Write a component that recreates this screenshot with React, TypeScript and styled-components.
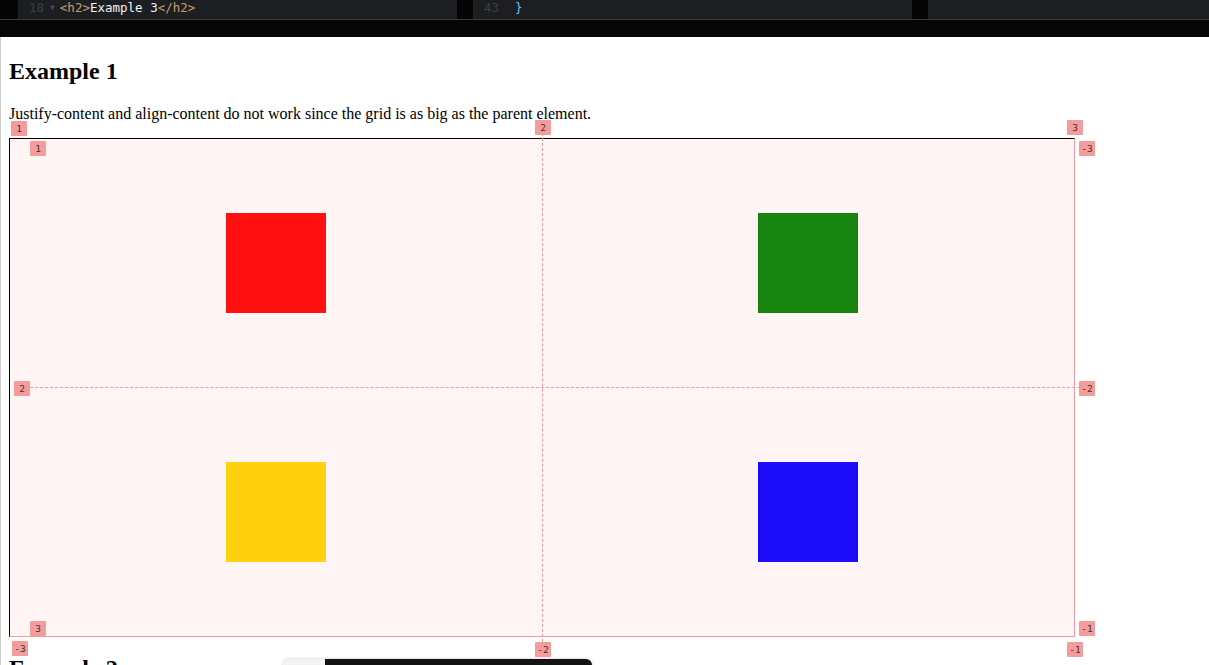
import React from "react";
import styled, { createGlobalStyle } from "styled-components";

const Global = createGlobalStyle`
  html, body { margin: 0; padding: 0; background: #fff; }
  body { font-family: "Liberation Serif", "Times New Roman", serif; overflow: hidden; height: 665px; }
`;

const EditorStrip = styled.div`
  display: flex;
  height: 19px;
  background: #050505;
  border-bottom: 1px solid #3a3b3f;
  overflow: hidden;
`;

const Gutter = styled.div<{ w: number }>`
  width: ${(p) => p.w}px;
  flex: none;
  background: #050505;
`;

const CodePane = styled.div<{ w?: number }>`
  ${(p) => (p.w ? `width: ${p.w}px; flex: none;` : "flex: 1;")}
  background: #1d1e22;
  display: flex;
  align-items: flex-end;
  padding-bottom: 4px;
  box-sizing: border-box;
  font-family: "DejaVu Sans Mono", monospace;
  font-size: 12.5px;
  line-height: 14px;
  white-space: pre;
`;

const LineNo = styled.span`
  color: #3c3e44;
  width: 26px;
  text-align: right;
  flex: none;
`;

const Fold = styled.span`
  color: #4a4c52;
  font-size: 8px;
  margin: 0 5px 0 6px;
`;

const Tag = styled.span`
  color: #c29c6c;
`;
const Txt = styled.span`
  color: #f2f2f2;
`;
const Brace = styled.span`
  color: #5cc8f0;
  margin-left: 16px;
`;

const BlackBar = styled.div`
  height: 17px;
  background: #060606;
`;

const Preview = styled.div`
  border-left: 1px solid #cfcfcf;
  padding: 0 8px;
  height: 628px;
  overflow: hidden;
  display: flow-root;
`;

const H2 = styled.h2<{ top?: number }>`
  font-size: 24px;
  font-weight: bold;
  margin: ${(p) => p.top ?? 20}px 0 20px;
  line-height: 28px;
`;

const P = styled.p`
  font-size: 16px;
  margin: 0 0 15px;
  line-height: 18px;
`;

const Grid = styled.div`
  position: relative;
  width: 1064px;
  height: 497px;
  display: grid;
  grid-template-columns: 1fr 1fr;
  grid-template-rows: 1fr 1fr;
  border-top: 1px solid #000;
  border-left: 1px solid #000;
  border-right: 1px solid #f29a9a;
  border-bottom: 1px solid #f29a9a;
  background: #fef5f4;
`;

const Box = styled.div<{ c: string }>`
  width: 100px;
  height: 100px;
  background: ${(p) => p.c};
  justify-self: center;
  align-self: center;
`;

const VLine = styled.div`
  position: absolute;
  left: 532px;
  top: -6px;
  bottom: -6px;
  border-left: 1px dashed #f49a9a;
`;

const HLine = styled.div`
  position: absolute;
  top: 248px;
  left: 20px;
  width: 1050px;
  border-top: 1px dashed #f49a9a;
`;

const Label = styled.span<{ x: number; y: number }>`
  position: absolute;
  left: ${(p) => p.x}px;
  top: ${(p) => p.y}px;
  min-width: 16px;
  height: 15px;
  padding: 0 1px;
  box-sizing: border-box;
  background: #f49b9b;
  border-radius: 1px;
  color: #4a2e2e;
  font-family: "DejaVu Sans Mono", monospace;
  font-size: 9.5px;
  line-height: 15px;
  text-align: center;
`;

const Toolbar = styled.div`
  position: fixed;
  left: 283px;
  top: 659px;
  width: 309px;
  height: 20px;
  display: flex;
  border-radius: 6px 6px 0 0;
  overflow: hidden;
  box-shadow: 0 0 3px rgba(0, 0, 0, 0.25);
`;

const ToolLight = styled.div`
  width: 42px;
  background: #f3f3f3;
`;
const ToolDark = styled.div`
  flex: 1;
  background: #131316;
`;

const labels: { t: string; x: number; y: number }[] = [
  { t: "1", x: 1, y: -18 },
  { t: "2", x: 525, y: -19 },
  { t: "3", x: 1057, y: -19 },
  { t: "1", x: 20, y: 2 },
  { t: "-3", x: 1069, y: 2 },
  { t: "2", x: 4, y: 242 },
  { t: "-2", x: 1069, y: 242 },
  { t: "3", x: 20, y: 482 },
  { t: "-1", x: 1069, y: 482 },
  { t: "-3", x: 2, y: 502 },
  { t: "-2", x: 525, y: 503 },
  { t: "-1", x: 1057, y: 503 },
];

export default function App() {
  return (
    <>
      <Global />
      <EditorStrip>
        <Gutter w={18} />
        <CodePane w={439}>
          <LineNo>18</LineNo>
          <Fold>▼</Fold>
          <Tag>&lt;h2&gt;</Tag>
          <Txt>Example 3</Txt>
          <Tag>&lt;/h2&gt;</Tag>
        </CodePane>
        <Gutter w={16} />
        <CodePane w={439}>
          <LineNo>43</LineNo>
          <Brace>{"}"}</Brace>
        </CodePane>
        <Gutter w={16} />
        <CodePane />
      </EditorStrip>
      <BlackBar />
      <Preview>
        <H2>Example 1</H2>
        <P>Justify-content and align-content do not work since the grid is as big as the parent element.</P>
        <Grid>
          <Box c="#ff1010" />
          <Box c="#188410" />
          <Box c="#ffd00c" />
          <Box c="#1c0cfa" />
          <VLine />
          <HLine />
          {labels.map((l, i) => (
            <Label key={i} x={l.x} y={l.y}>
              {l.t}
            </Label>
          ))}
        </Grid>
        <H2 top={17}>Example 2</H2>
      </Preview>
      <Toolbar>
        <ToolLight />
        <ToolDark />
      </Toolbar>
    </>
  );
}
